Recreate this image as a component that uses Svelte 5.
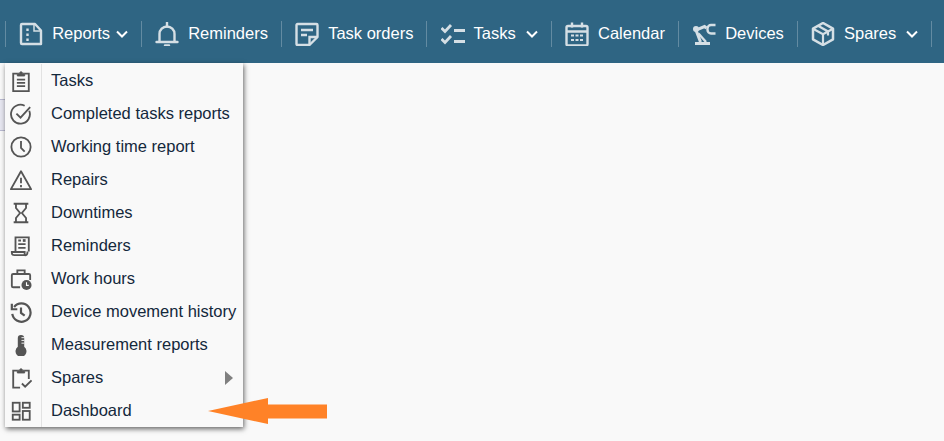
<script>
  const navItems = [
    { label: "Reports", icon: "reports", caret: "tight" },
    { label: "Reminders", icon: "bell" },
    { label: "Task orders", icon: "note" },
    { label: "Tasks", icon: "checklist", caret: "wide" },
    { label: "Calendar", icon: "calendar" },
    { label: "Devices", icon: "robot" },
    { label: "Spares", icon: "box", caret: "wide" }
  ];

  const menuItems = [
    { label: "Tasks", icon: "clipboard" },
    { label: "Completed tasks reports", icon: "check" },
    { label: "Working time report", icon: "clock" },
    { label: "Repairs", icon: "warning" },
    { label: "Downtimes", icon: "hourglass" },
    { label: "Reminders", icon: "receipt" },
    { label: "Work hours", icon: "briefcase" },
    { label: "Device movement history", icon: "history" },
    { label: "Measurement reports", icon: "thermo" },
    { label: "Spares", icon: "clipcheck", sub: true },
    { label: "Dashboard", icon: "dash" }
  ];
</script>

{#snippet navIcon(name)}
  <svg class="nav-icon" viewBox="0 0 24 24" fill="none" stroke="#d5dfe5" stroke-width="2.400">
    {#if name === "reports"}
      <path d="M3 2h13l6 6.500V22H3a1 1 0 0 1-1-1V3a1 1 0 0 1 1-1z" stroke-linejoin="round" />
      <path d="M15 2v7h7" stroke-width="1.500" />
      <path d="M8.500 6.500v2.500M8.500 11.500v2.500M8.500 16.500v2.500" />
    {:else if name === "bell"}
      <path d="M1.500 20h21" stroke-linecap="round" />
      <path d="M4.500 20v-8a7.500 7.500 0 0 1 15 0v8" />
      <path d="M12 0.500v4M10 23.500h4" stroke-linecap="round" />
    {:else if name === "note"}
      <path d="M22.500 15V3a1 1 0 0 0-1-1h-19a1 1 0 0 0-1 1v19a1 1 0 0 0 1 1h12z" stroke-linejoin="round" />
      <path d="M22.500 15h-8v8M6 8h12M6 13h6" />
    {:else if name === "checklist"}
      <path d="M0.500 6l3.500 3.500 6-6.500M0.500 17l3.500 3.500 6-6.500" stroke-width="2.800" />
      <path d="M13 8.500h11M13 19.500h11" stroke-width="2.800" />
    {:else if name === "calendar"}
      <rect x="1.500" y="4" width="21" height="19.500" rx="1.500" />
      <path d="M1.500 9.500h21M7 0.500v5M17 0.500v5" />
      <path d="M6 13.500h3M10.500 13.500h3M15 13.500h3M6 18h3M10.500 18h3M15 18h3" stroke-width="2" />
    {:else if name === "robot"}
      <path d="M3 20h15v3H3z" fill="#d5dfe5" stroke="none" />
      <path d="M8.500 20L4 8 12.500 4.500l2 1.500" stroke-width="3" />
      <path d="M6.500 11.500l7.500 8.500" stroke-width="2.400" />
      <circle cx="4" cy="7" r="3" fill="#d5dfe5" stroke="none" />
      <path d="M23.500 3h-4.500a3.500 3.500 0 0 0-3.500 3.500v1.500a3.500 3.500 0 0 0 3.500 3.500h4.500" stroke-width="2.400" />
    {:else if name === "box"}
      <path d="M12 1l10 5.700v10.600L12 23 2 17.300V6.700z" stroke-linejoin="round" stroke-width="2.500" />
      <path d="M2 6.700L12 12.300l10-5.600M12 12.300V23M7 3.800l10 5.700v4" stroke-width="2.200" />
    {/if}
  </svg>
{/snippet}

{#snippet menuIcon(name)}
  <svg class="menu-icon" viewBox="0 0 24 24" fill="none" stroke="#555" stroke-width="2">
    {#if name === "clipboard"}
      <path d="M8 4H3.500v19h17V4H16" />
      <path d="M8 6.500V3.500h2.500a1.500 1.500 0 0 1 3 0H16v3z" fill="#555" stroke-width="1" />
      <path d="M7.500 10.500h9M7.500 14h9M7.500 17.500h9" />
    {:else if name === "check"}
      <path d="M21 8.500A10.300 10.300 0 1 1 16 3" />
      <path d="M7 11.500l4.500 4.500L22 4.500" />
    {:else if name === "clock"}
      <circle cx="12" cy="12" r="10.500" />
      <path d="M12 5.500V13l4 4" />
    {:else if name === "warning"}
      <path d="M12 2.500L23 22H1z" stroke-linejoin="round" />
      <path d="M12 9.500v6M12 17.500v2.500" />
    {:else if name === "hourglass"}
      <path d="M4 2h16M4 22h16" stroke-width="2.200" />
      <path d="M6.500 2v4.500L11 12l-4.500 5.500V22M17.500 2v4.500L13 12l-4.500" stroke-width="0" />
      <path d="M6.500 2v4.500L11 12l-4.500 5.500V22M17.500 2v4.500L13 12l4.500 5.500V22" />
    {:else if name === "receipt"}
      <path d="M6 18V2.500h14.500V18" />
      <path d="M2 18.500h14v3.500H4.500A2.500 2.500 0 0 1 2 19.500zM16 22a2.500 2.500 0 0 0 3-2.500V18" />
      <path d="M9 6h3M9 10h8M9 14h8" />
      <path d="M14 6h3" stroke-width="3" />
    {:else if name === "briefcase"}
      <path d="M11 21H3.500a1.500 1.500 0 0 1-1.500-1.500V8a1.500 1.500 0 0 1 1.500-1.500h17A1.500 1.500 0 0 1 22 8v5" />
      <path d="M8 6.500V2.500h8v4" />
      <circle cx="18" cy="18.500" r="5.500" fill="#555" stroke="none" />
      <path d="M18 15.500v3.500h2.500" stroke="#fff" stroke-width="1.200" />
    {:else if name === "history"}
      <path d="M4.500 6.500A10 10 0 1 1 2.500 14" stroke-width="2.400" />
      <path d="M2 3v6h6" stroke-width="2.400" />
      <path d="M12 7v6l4 3" stroke-width="2.400" />
    {:else if name === "thermo"}
      <path d="M8.500 14V4.500a3.500 3.500 0 0 1 7 0V14a6 6 0 1 1-7 0z" fill="#555" stroke="none" />
      <path d="M12.500 4h3M12.500 7h3M12.500 10h3" stroke="#fff" stroke-width="1" />
    {:else if name === "clipcheck"}
      <path d="M8 4H3.500v18.500H11M16 4h4.500v9" />
      <path d="M8 6.500V3.500h2.500a1.500 1.500 0 0 1 3 0H16v3z" fill="#555" stroke-width="1" />
      <path d="M13 18l3.500 3.500 7-7" />
    {:else if name === "dash"}
      <rect x="3" y="3" width="7.500" height="9.500" />
      <rect x="3" y="16" width="7.500" height="5.500" />
      <rect x="14" y="3" width="7.500" height="5.500" />
      <rect x="14" y="12" width="7.500" height="9.500" />
    {/if}
  </svg>
{/snippet}

<div class="page">
  <nav class="topbar">
    {#each navItems as item}
      <a class="nav-item" href="#top">
        {@render navIcon(item.icon)}
        <span class="nav-label">{item.label}</span>
        {#if item.caret}
          <svg class="caret {item.caret}" viewBox="0 0 12 8" fill="none" stroke="#fff" stroke-width="2">
            <path d="M1 1.500l5 5 5-5" />
          </svg>
        {/if}
      </a>
    {/each}
  </nav>

  <div class="stray"></div>

  <ul class="dropdown">
    {#each menuItems as item}
      <li class="menu-item">
        <span class="gutter">{@render menuIcon(item.icon)}</span>
        <span class="menu-label">{item.label}</span>
        {#if item.sub}
          <span class="sub-arrow"></span>
        {/if}
      </li>
    {/each}
  </ul>

  <svg class="pointer" viewBox="0 0 120 28" width="120" height="28">
    <path d="M0 14L60 1v6.500h59v14H60V27z" fill="#ff8227" />
  </svg>
</div>

<style>
  :global(body) {
    margin: 0;
    background: #f9f9f9;
    font-family: "Liberation Sans", Arial, sans-serif;
  }

  .page {
    position: relative;
    height: 441px;
    overflow: hidden;
  }

  .topbar {
    display: flex;
    align-items: center;
    height: 63px;
    padding-left: 5px;
    background: #2f6583;
  }

  .nav-item {
    display: flex;
    align-items: center;
    gap: 10px;
    height: 26px;
    padding: 0 13px 0 14.200px;
    margin-top: 4px;
    color: #fff;
    font-size: 16.500px;
    text-decoration: none;
    white-space: nowrap;
    border-left: 1px solid rgba(255, 255, 255, 0.25);
  }

  .nav-item:last-child {
    border-right: 1px solid rgba(255, 255, 255, 0.25);
  }

  .nav-icon {
    width: 24px;
    height: 24px;
    margin: 0 -1px;
    flex: none;
  }

  .caret {
    width: 12px;
    height: 8px;
    flex: none;
  }

  .caret.tight {
    margin-left: -4px;
  }

  .stray {
    position: absolute;
    left: 0;
    top: 99px;
    width: 5px;
    height: 32px;
    background: #e6e6f0;
    border-top: 1px solid #b9b9d0;
    border-bottom: 1px solid #b9b9d0;
    box-sizing: border-box;
  }

  .dropdown {
    position: absolute;
    left: 5px;
    top: 63px;
    width: 238px;
    margin: 0;
    padding: 1px 0 0;
    list-style: none;
    background: #f9f9f9;
    box-shadow: 1px 2px 5px rgba(0, 0, 0, 0.6);
  }

  .menu-item {
    display: flex;
    align-items: center;
    height: 33px;
    color: #14283c;
    font-size: 16.500px;
  }

  .gutter {
    display: flex;
    align-items: center;
    box-sizing: border-box;
    flex: none;
    width: 37px;
    height: 33px;
    padding-left: 5px;
    margin-right: 9px;
    border-right: 1px solid #e2e2e2;
  }

  .menu-icon {
    width: 22px;
    height: 22px;
  }

  .menu-label {
    white-space: nowrap;
  }

  .sub-arrow {
    width: 0;
    height: 0;
    margin-left: auto;
    margin-right: 10px;
    border-top: 7px solid transparent;
    border-bottom: 7px solid transparent;
    border-left: 8px solid #808080;
  }

  .pointer {
    position: absolute;
    left: 208px;
    top: 397px;
  }
</style>
